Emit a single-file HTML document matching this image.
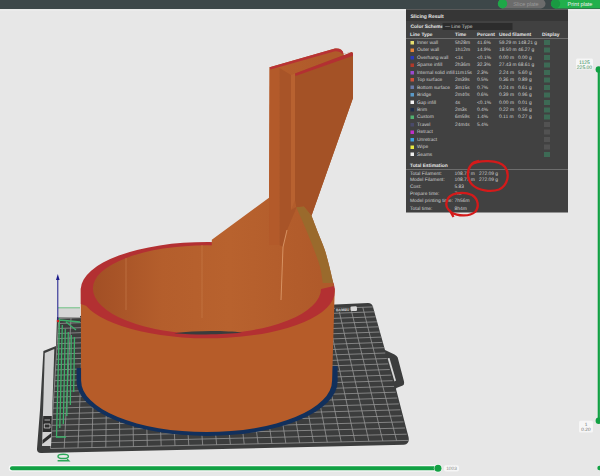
<!DOCTYPE html><html><head><meta charset="utf-8"><style>
html,body{margin:0;padding:0;}
body{width:600px;height:476px;overflow:hidden;background:#e7e7e7;position:relative;font-family:"Liberation Sans",sans-serif;text-rendering:geometricPrecision;}
svg{position:absolute;left:0;top:0;}
.panel{position:absolute;left:406px;top:10px;width:324px;height:405px;background:#414141;color:#d0d0d0;font-size:9.8px;transform:scale(0.5);transform-origin:0 0;}
.panel .tb{position:absolute;left:0;top:0;width:324px;height:22px;background:#363636;}
.panel .t{position:absolute;white-space:nowrap;line-height:14px;}
.r{position:absolute;left:0;width:324px;height:14px;line-height:14px;white-space:nowrap;}
.r i{position:absolute;left:8.5px;top:3.5px;width:7px;height:7px;}
.r span{position:absolute;top:0;}
.r .c1{left:22px} .r .c2{left:98px} .r .c3{left:142px} .r .c4{left:186px} .r .c5{left:224px}
.r b{position:absolute;left:276px;top:2px;width:12px;height:10px;}
.bold{font-weight:bold;color:#e8e8e8}
</style></head><body>
<svg width="600" height="476" viewBox="0 0 600 476">
 <rect x="0" y="0" width="600" height="9.2" fill="#3d4749"/><rect x="0" y="9.2" width="600" height="1.3" fill="#f0f0f0"/><rect x="406" y="9.2" width="162" height="1.3" fill="#363636"/>

 <path d="M57 317 L368 303 Q372 303 373 307 L385 350 L394.5 354.5 Q397 356 397.7 357.6 L404 381.6 Q404.5 385 402.7 385.4 L396.4 388 L396 389 L408.5 437 Q410 443.5 404 444.8 L41 453 Q36.5 453 37 448.5 L40 410 L43.4 351 L56 346 Z" fill="#3c3d3d"/>
 <path d="M58.8 318.5L50.4 448.5M71.0 318.0L64.2 448.2M83.2 317.6L78.0 447.9M95.3 317.1L91.9 447.6M107.5 316.7L105.8 447.3M119.6 316.3L119.6 446.9M131.8 315.8L133.4 446.6M144.0 315.4L147.3 446.3M156.1 314.9L161.2 446.0M168.3 314.5L175.0 445.7M180.4 314.0L188.8 445.4M192.6 313.6L202.7 445.1M204.8 313.1L216.6 444.8M216.9 312.7L230.4 444.4M229.1 312.2L244.2 444.1M241.2 311.8L258.1 443.8M253.4 311.3L271.9 443.5M265.6 310.9L285.8 443.2M277.7 310.4L299.6 442.9M289.9 310.0L313.5 442.6M302.0 309.5L327.3 442.3M314.2 309.1L341.2 441.9M326.4 308.6L355.0 441.6M338.5 308.2L368.9 441.3M350.7 307.7L382.8 441.0M362.8 307.3L396.6 440.7M58.8 318.5L373.2 306.9M58.5 323.5L374.5 311.8M58.2 328.5L375.8 316.8M57.9 333.5L377.1 321.8M57.5 338.6L378.4 326.8M57.2 343.7L379.8 332.0M56.9 348.9L381.2 337.1M56.5 354.1L382.5 342.4M56.2 359.3L383.9 347.7M55.8 364.6L385.3 353.0M55.5 369.9L386.8 358.5M55.1 375.3L388.2 363.9M54.8 380.7L389.7 369.5M54.4 386.1L391.2 375.1M54.1 391.6L392.6 380.7M53.7 397.1L394.1 386.4M53.4 402.6L395.7 392.2M53.0 408.2L397.2 398.0M52.6 413.9L398.8 403.9M52.3 419.5L400.3 409.8M51.9 425.3L401.9 415.8M51.5 431.0L403.5 421.9M51.1 436.8L405.1 428.0M50.7 442.6L406.7 434.2M50.4 448.5L408.4 440.4" stroke="#959595" stroke-width="0.8" fill="none"/>
 <path d="M335 307.8 L352 307 L352.3 311.2 L335.3 312 Z" fill="#3c3d3d"/>
 <text x="336" y="311.3" font-size="3.6" font-weight="bold" fill="#d8d8d8" transform="rotate(-2.6 336 311)">BAMBU</text>
 <rect x="350.5" y="306.6" width="6.5" height="4.6" rx="1.2" fill="#d8d8d8" transform="rotate(-2.6 350 309)"/>
 <path d="M387.6 358.3 L389.5 358 L396 380.5 L394.5 381.5 Z" fill="#d8d8d8"/>
 <path d="M44.8 353 L54.3 349 L51 446 L42 446 Z" fill="#d2d2d2"/>
 <path d="M43.2 416 L51.8 416 L51.4 432 L42.6 432 Z" fill="#2e2e2e"/>
 <path d="M44.5 420 L50 420 M44.3 424 L50 424 L50 428 L44.3 428 Z" stroke="#cfcfcf" stroke-width="0.8" fill="none"/>
 <path d="M42.5 440 L51.3 433 L51.2 437 L42.4 444 Z" fill="#2e2e2e"/>
 <rect x="58" y="308" width="22" height="9.5" fill="#d6d6d6"/>
 <line x1="58" y1="307.8" x2="80" y2="307.8" stroke="#6cc080" stroke-width="1"/>
 <g stroke="#3db06a" stroke-width="1.3" fill="none">
  <path d="M59.5 318 L56.5 437 L66 437 M62.3 325 L59.8 428 M65.3 329 L63.3 424 M68.3 332 L66.8 416 M71.3 335 L70.3 405 M74.5 337 L73.7 392 M59.5 320 L80 322 M66 322 L76 330"/>
 </g>
 <line x1="57.8" y1="279" x2="57.8" y2="321" stroke="#1a1a8a" stroke-width="1"/>
 <path d="M56 280 L57.8 274 L59.6 280 Z" fill="#1a1a8a"/>
 <circle cx="58" cy="321" r="1.3" fill="#d02020"/>
 <path d="M76.6 381.4 A130.5 54.5 0 0 0 337.6 381.4 L337.6 366 L76.6 368 Z" fill="#12305c"/>
 <path d="M80.8 288.6 L81.1 380.6 A125.5 51.5 0 0 0 332.1 380.6 L334.75 288.6 Z" fill="#b65c29"/>
 <path d="M80.8 288.6 A127 47.6 0 0 1 334.75 288.6 L334.75 291.5 A127.4 46.8 0 0 1 86 305.8 L80.8 304 Z" fill="#b33032"/>
 <defs><linearGradient id="ig" x1="93" y1="0" x2="321" y2="0" gradientUnits="userSpaceOnUse"><stop offset="0" stop-color="#a24f25"/><stop offset="0.3" stop-color="#b45e2c"/><stop offset="0.6" stop-color="#b8622e"/><stop offset="1" stop-color="#b05a2a"/></linearGradient></defs>
 <path d="M92.9 288.3 A114.1 43 0 0 1 321.1 288.3 A114.1 45.6 0 0 1 92.9 288.3 Z" fill="url(#ig)"/>
 <path d="M174 333.2 C195 330.5 225 330.5 242 332.6 C225 334.8 195 335 174 333.2 Z" fill="#3a3c3c"/>
 <path d="M211.8 239.7 L269 197.7 L269.6 67.3 L335 48.6 Q342 47.8 343.5 53.4 L351.5 52.2 Q353 52.5 353 54 L353 98 L311.5 215.8C312.6 218.6 315.8 227.1 318.0 232.8C320.2 238.5 322.8 244.1 324.7 249.8C326.6 255.5 328.0 261.3 329.4 266.8C330.8 272.3 332.6 280.3 333.2 283.0 L334 286 L321 289 L315 278 L300 267 L280 259 L260 254 L240 251 L211.8 249 Z" fill="url(#ig)"/>
 <path d="M295 73.5 L351.5 52.2 Q353 52.5 353 54 L353 98 L311.5 215.8 L304 206.5 L296.3 207.3 L295 200 Z" fill="#a45226"/>
 <path d="M291 75 L295 73.5 L295 200 L291 210 Z" fill="#b86230"/>
 <path d="M269.6 67.3 L279.5 68 L279.5 245 L269 245 Z" fill="#b35a2a"/>
 <path d="M279.5 68 L291 75 L291 210 L297 206.6 L287 230 L283 247 L279.5 245 Z" fill="#a85428"/>
 <path d="M296.3 207.3 L304 206.5 L311.5 215.8C312.6 218.6 315.8 227.1 318.0 232.8C320.2 238.5 322.8 244.1 324.7 249.8C326.6 255.5 328.0 261.3 329.4 266.8C330.8 272.3 332.6 280.3 333.2 283.0L322.8 283C322.3 280.3 321.6 272.6 320.0 266.8C318.4 261.0 315.8 254.3 313.4 248.0C311.0 241.7 308.6 235.8 305.8 229.0C303.0 222.2 297.9 210.9 296.3 207.3Z" fill="#9a6a2c"/>
 <path d="M269.6 67.3 L335 48.6 Q342 47.8 343.5 53.4 L342 54 Q340.5 51 335 51.2 L270.5 69.5 Z" fill="#b83234"/>
 <path d="M343.5 53.4 L351.5 52.2 L344 55.5 Z" fill="#e0e0e0"/>
 <path d="M295 73.5 L351.5 52.2 Q353 52.5 353 54 L353 55.8 L295.5 76 Z" fill="#b33032"/>
 <path d="M287 230 L283 247 L281 300" stroke="#e0a070" stroke-width="0.8" fill="none"/>
 <path d="M126 258 L126 310 M202 245 L202 318" stroke="#c87a48" stroke-width="0.8" fill="none" opacity="0.8"/>

 <!-- sliders -->
 <line x1="12" y1="468.3" x2="436" y2="468.3" stroke="#ffffff" stroke-width="6.5" stroke-linecap="round" opacity="0.75"/>
 <line x1="12" y1="468.3" x2="436" y2="468.3" stroke="#12a144" stroke-width="4" stroke-linecap="round"/>
 <circle cx="438" cy="468.3" r="4.2" fill="#ffffff" opacity="0.7"/>
 <circle cx="438" cy="468.3" r="3.5" fill="#12a144"/>
 <rect x="444" y="465.3" width="15" height="6.2" rx="2" fill="#f6f6f6"/>
 <text x="451.5" y="470.2" font-size="4.8" fill="#8a8a8a" text-anchor="middle">1003</text>
 <line x1="598.8" y1="69" x2="598.8" y2="421" stroke="#12a144" stroke-width="2.2"/>
 <circle cx="598.8" cy="69.5" r="3.2" fill="#12a144"/>
 <circle cx="598.8" cy="420.7" r="3.2" fill="#12a144"/>
 <circle cx="599.5" cy="468" r="2.2" fill="#12a144"/>
 <rect x="576" y="58.5" width="17" height="11" rx="1.5" fill="#f6f6f6"/>
 <text x="584.5" y="63.6" font-size="5" fill="#2e8a50" text-anchor="middle">1125</text>
 <text x="584.5" y="68.6" font-size="5" fill="#2e8a50" text-anchor="middle">225.00</text>
 <rect x="579" y="420.7" width="14" height="11.8" rx="1.5" fill="#f6f6f6"/>
 <text x="586" y="425.8" font-size="4.8" fill="#707070" text-anchor="middle">1</text>
 <text x="586" y="430.8" font-size="4.8" fill="#707070" text-anchor="middle">0.20</text>
 <ellipse cx="63.2" cy="456.4" rx="5.2" ry="2.1" stroke="#2aa858" stroke-width="1.4" fill="none"/>
 <path d="M57.6 460.8 L68.8 460.8 L67 459" stroke="#2aa858" stroke-width="1.4" fill="none"/>
 <!-- buttons -->
 <rect x="498" y="-1" width="47.5" height="9.5" rx="4.7" fill="#6c6c6c"/>
 <circle cx="502.5" cy="3.8" r="4.7" fill="#1ea848"/>
 <text x="526" y="6" font-size="5.5" fill="#9a9a9a" text-anchor="middle">Slice plate</text>
 <rect x="551" y="-1" width="54" height="9.5" rx="4.7" fill="#22b04c"/>
 <circle cx="555.5" cy="3.8" r="4.7" fill="#1a9a42"/>
 <text x="580" y="6" font-size="5.5" fill="#f0f0f0" text-anchor="middle">Print plate</text>
 <path d="M563 17.5 L565 15 L567 17.5" stroke="#cfcfcf" stroke-width="0.9" fill="none"/>
</svg>
<div class="panel">
 <div class="tb"></div>
 <div class="t bold" style="left:9px;top:6.4px;font-size:10px">Slicing Result</div>
 <div class="t bold" style="left:9px;top:26.4px">Color Scheme</div>
 <div style="position:absolute;left:73px;top:26px;width:140px;height:14px;background:#2c2c2c"></div>
 <div class="t" style="left:78px;top:27px">— Line Type</div>
 <div class="t bold" style="left:8px;top:42px">Line Type</div>
 <div class="t bold" style="left:98px;top:42px">Time</div>
 <div class="t bold" style="left:142px;top:42px">Percent</div>
 <div class="t bold" style="left:186px;top:42px">Used filament</div>
 <div class="t bold" style="left:272px;top:42px">Display</div>
 <div style="position:absolute;left:0;top:56.5px;width:324px;height:1.4px;background:#9a9a9a"></div>
 <div class="r" style="top:58.40px"><i style="background:#e8e070"></i><span class="c1">Inner wall</span><span class="c2">5h28m</span><span class="c3">41.6%</span><span class="c4">59.29 m</span><span class="c5">148.21 g</span><b style="background:#3d6a55"></b></div><div class="r" style="top:73.30px"><i style="background:#e8843a"></i><span class="c1">Outer wall</span><span class="c2">1h12m</span><span class="c3">14.9%</span><span class="c4">18.50 m</span><span class="c5">46.27 g</span><b style="background:#3d6a55"></b></div><div class="r" style="top:88.20px"><i style="background:#2a3ab8"></i><span class="c1">Overhang wall</span><span class="c2"><1s</span><span class="c3"><0.1%</span><span class="c4">0.00 m</span><span class="c5">0.00 g</span><b style="background:#3d6a55"></b></div><div class="r" style="top:103.10px"><i style="background:#b03a2a"></i><span class="c1">Sparse infill</span><span class="c2">2h36m</span><span class="c3">32.3%</span><span class="c4">27.43 m</span><span class="c5">68.61 g</span><b style="background:#3d6a55"></b></div><div class="r" style="top:118.00px"><i style="background:#9a4ad0"></i><span class="c1">Internal solid infill</span><span class="c2">11m15s</span><span class="c3">2.3%</span><span class="c4">2.24 m</span><span class="c5">5.60 g</span><b style="background:#3d6a55"></b></div><div class="r" style="top:132.90px"><i style="background:#d0503a"></i><span class="c1">Top surface</span><span class="c2">2m39s</span><span class="c3">0.5%</span><span class="c4">0.36 m</span><span class="c5">0.89 g</span><b style="background:#3d6a55"></b></div><div class="r" style="top:147.80px"><i style="background:#6a7aa8"></i><span class="c1">Bottom surface</span><span class="c2">3m15s</span><span class="c3">0.7%</span><span class="c4">0.24 m</span><span class="c5">0.61 g</span><b style="background:#3d6a55"></b></div><div class="r" style="top:162.70px"><i style="background:#5a9ac8"></i><span class="c1">Bridge</span><span class="c2">2m40s</span><span class="c3">0.6%</span><span class="c4">0.39 m</span><span class="c5">0.96 g</span><b style="background:#3d6a55"></b></div><div class="r" style="top:177.60px"><i style="background:#f4f4f4"></i><span class="c1">Gap infill</span><span class="c2">4s</span><span class="c3"><0.1%</span><span class="c4">0.00 m</span><span class="c5">0.01 g</span><b style="background:#3d6a55"></b></div><div class="r" style="top:192.50px"><i style="background:#1e2e4a"></i><span class="c1">Brim</span><span class="c2">2m3s</span><span class="c3">0.4%</span><span class="c4">0.22 m</span><span class="c5">0.56 g</span><b style="background:#3d6a55"></b></div><div class="r" style="top:207.40px"><i style="background:#50b070"></i><span class="c1">Custom</span><span class="c2">6m59s</span><span class="c3">1.4%</span><span class="c4">0.11 m</span><span class="c5">0.27 g</span><b style="background:#3d6a55"></b></div><div class="r" style="top:222.30px"><i style="background:#4a4a6a"></i><span class="c1">Travel</span><span class="c2">24m4s</span><span class="c3">5.4%</span><span class="c4"></span><span class="c5"></span><b style="background:#525252"></b></div><div class="r" style="top:237.20px"><i style="background:#c030c8"></i><span class="c1">Retract</span><span class="c2"></span><span class="c3"></span><span class="c4"></span><span class="c5"></span><b style="background:#525252"></b></div><div class="r" style="top:252.10px"><i style="background:#40a0e0"></i><span class="c1">Unretract</span><span class="c2"></span><span class="c3"></span><span class="c4"></span><span class="c5"></span><b style="background:#525252"></b></div><div class="r" style="top:267.00px"><i style="background:#e8e840"></i><span class="c1">Wipe</span><span class="c2"></span><span class="c3"></span><span class="c4"></span><span class="c5"></span><b style="background:#525252"></b></div><div class="r" style="top:281.90px"><i style="background:#f0f0f0"></i><span class="c1">Seams</span><span class="c2"></span><span class="c3"></span><span class="c4"></span><span class="c5"></span><b style="background:#3d6a55"></b></div>
 <div class="t bold" style="left:8px;top:304.5px">Total Estimation</div>
 <div style="position:absolute;left:0;top:318.5px;width:324px;height:1.4px;background:#9a9a9a"></div>
 <div class="t" style="left:8px;top:320px">Total Filament:</div>
 <div class="t" style="left:97px;top:320px">108.77 m</div>
 <div class="t" style="left:146px;top:320px">272.09 g</div>
 <div class="t" style="left:8px;top:333px">Model Filament:</div>
 <div class="t" style="left:97px;top:333px">108.77 m</div>
 <div class="t" style="left:146px;top:333px">272.09 g</div>
 <div class="t" style="left:8px;top:347px">Cost:</div>
 <div class="t" style="left:97px;top:347px">5.83</div>
 <div class="t" style="left:8px;top:361px">Prepare time:</div>
 <div class="t" style="left:97px;top:361px">7m</div>
 <div class="t" style="left:8px;top:374.5px">Model printing time:</div>
 <div class="t" style="left:97px;top:374.5px">7h56m</div>
 <div class="t" style="left:8px;top:389.5px">Total time:</div>
 <div class="t" style="left:97px;top:389.5px">8h4m</div>
</div>

<svg width="600" height="476" viewBox="0 0 600 476" style="pointer-events:none">
 <path d="M471 165 C478 159.5 499 159.5 505 167 C510 174 508 185 499 189.5 C491 192.5 478 190.5 472 184.5 C467 179 466.5 171 471 165 C473 162.5 476 161.5 479 161" stroke="#d41a1a" stroke-width="2.3" fill="none"/>
 <path d="M447 200.5 C449 193.5 462 190.5 472 195 C478.5 199 479.5 207 475 212 C470 216.5 458 216.5 451.5 212.5 C446.5 209 445.5 204.5 447 200.5 M449.5 210 L453.5 217" stroke="#d41a1a" stroke-width="2.3" fill="none"/>
</svg>
</body></html>
